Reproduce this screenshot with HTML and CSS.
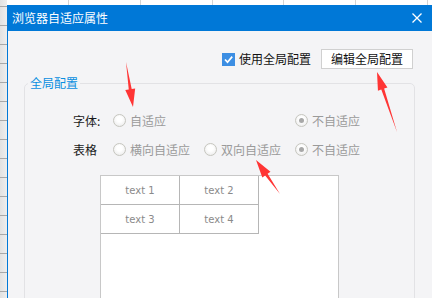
FILE: index.html
```html
<!DOCTYPE html>
<html lang="zh">
<head>
<meta charset="utf-8">
<title>浏览器自适应属性</title>
<link rel="stylesheet" href="styles.css">
</head>
<body>
<div class="dialog">
  <div class="titlebar">
    <span class="title">浏览器自适应属性</span>
    <svg class="close" width="10" height="10" viewBox="0 0 10 10"><path d="M0.5 0.5L9.5 9.5M9.5 0.5L0.5 9.5" stroke="#fff" stroke-width="1.3" fill="none"/></svg>
  </div>
  <div class="content">
    <div class="toprow">
      <label class="check"><span class="checkbox"><svg width="13" height="13" viewBox="0 0 13 13"><path d="M3 6.5L5.5 9.2L10.2 3.6" stroke="#fff" stroke-width="1.7" fill="none"/></svg></span>使用全局配置</label>
      <button class="btn">编辑全局配置</button>
    </div>
    <fieldset class="group">
      <legend class="legend">全局配置</legend>
      <div class="inner">
        <div class="opts">
          <span class="lbl">字体:</span>
          <span class="radio"><i class="dot"></i>自适应</span>
          <span></span>
          <span class="radio on"><i class="dot"></i>不自适应</span>
          <span class="lbl">表格</span>
          <span class="radio"><i class="dot"></i>横向自适应</span>
          <span class="radio"><i class="dot"></i>双向自适应</span>
          <span class="radio on"><i class="dot"></i>不自适应</span>
        </div>
        <div class="preview">
          <div class="cells">
            <span class="cell">text 1</span>
            <span class="cell">text 2</span>
            <span class="cell">text 3</span>
            <span class="cell">text 4</span>
          </div>
        </div>
      </div>
    </fieldset>
  </div>
</div>
<svg class="arrows" width="432" height="298" viewBox="0 0 432 298">
  <polygon fill="#ff3535" points="126,62 131.71,88.99 135.17,88.45 133,107 125.29,89.99 128.75,89.45"/>
  <polygon fill="#ff3535" points="397,132 384.11,88.61 387.44,87.5 377,72 377.94,90.66 381.27,89.55"/>
  <polygon fill="#ff3535" points="280,194 267.62,173.84 270.48,171.83 256,160 262.31,177.6 265.16,175.58"/>
</svg>
</body>
</html>
```

FILE: styles.css
```css
html, body {
  margin: 0;
  padding: 0;
}
body {
  width: 432px;
  height: 298px;
  overflow: hidden;
  padding: 5px 0 0 7px;
  box-sizing: border-box;
  font-family: "Noto Sans CJK SC", "Noto Sans", sans-serif;
  font-size: 12px;
  background-color: #fff;
  background-image:
    repeating-linear-gradient(to bottom, transparent 0 6px, #a8a8a8 6px 7px, transparent 7px 19px),
    linear-gradient(to right, #e2e2e2, #eeeeee),
    repeating-linear-gradient(to right, transparent 0 68px, #d4d4d4 68px 69px, transparent 69px 71.8px);
  background-size: 7px 100%, 7px 100%, 100% 5px;
  background-repeat: no-repeat;
  position: relative;
}
.dialog {
  height: 293px;
  border-left: 1px solid #0078d7;
  background: #f4f4f6;
  display: flex;
  flex-direction: column;
  overflow: hidden;
}
.titlebar {
  height: 26px;
  flex: none;
  background: #0078d7;
  color: #fff;
  display: flex;
  align-items: center;
  justify-content: space-between;
  padding: 0 10px 0 4px;
}
.title {
  font-size: 12px;
  line-height: 14px;
  letter-spacing: 0;
}
.close {
  display: block;
}
.content {
  flex: 1;
  display: flex;
  flex-direction: column;
}
.toprow {
  display: flex;
  justify-content: flex-end;
  align-items: center;
  gap: 10px;
  margin-top: 18px;
  padding-right: 19px;
}
.check {
  display: flex;
  align-items: center;
  gap: 4px;
  color: #111;
  line-height: 14px;
}
.checkbox {
  width: 13px;
  height: 13px;
  background: #3c8ee3;
  display: block;
}
.checkbox svg {
  display: block;
}
.btn {
  height: 20px;
  width: 92px;
  padding: 0;
  margin: 0;
  border: 1px solid #d0d0d0;
  background: #fff;
  font-family: inherit;
  font-size: 12px;
  line-height: 16px;
  color: #111;
}
.group {
  margin: 7px 17px 0 16px;
  padding: 0;
  border: 1px solid #e2e2e5;
  border-radius: 5px;
  min-width: 0;
  flex: 1;
  margin-bottom: -20px;
}
.legend {
  margin-left: 3px;
  padding: 0 2px;
  font-size: 12px;
  line-height: 14px;
  color: #0a8fe0;
}
.inner {
  padding-left: 48px;
}
.opts {
  margin-top: 16px;
  display: grid;
  grid-template-columns: 40px 91px 91px auto;
  grid-auto-rows: 29px;
  align-items: center;
  line-height: 14px;
}
.lbl {
  color: #1a1a1a;
}
.radio {
  display: flex;
  align-items: center;
  gap: 4px;
  color: #9a9a9a;
  white-space: nowrap;
}
.dot {
  width: 13px;
  height: 13px;
  box-sizing: border-box;
  border-radius: 50%;
  border: 1px solid #c6c6bf;
  background: radial-gradient(circle at 50% 40%, #ffffff 30%, #e6e6e6 100%);
  display: block;
  position: relative;
}
.radio.on .dot::after {
  content: "";
  position: absolute;
  left: 3px;
  top: 3px;
  width: 5px;
  height: 5px;
  border-radius: 50%;
  background: #a8a8a8;
}
.preview {
  margin: 11px 0 0 27px;
  width: 239px;
  height: 150px;
  box-sizing: border-box;
  border: 1px solid #c8c8c8;
  background: #fff;
}
.cells {
  display: grid;
  grid-template-columns: 79px 79px;
  grid-auto-rows: 29px;
  width: 158px;
}
.cell {
  border-right: 1px solid #b6b6b6;
  border-bottom: 1px solid #b6b6b6;
  display: flex;
  align-items: center;
  justify-content: center;
  font-family: "DejaVu Sans", sans-serif;
  font-size: 10px;
  color: #8a8a8a;
}
.arrows {
  position: absolute;
  left: 0;
  top: 0;
  pointer-events: none;
}
```
